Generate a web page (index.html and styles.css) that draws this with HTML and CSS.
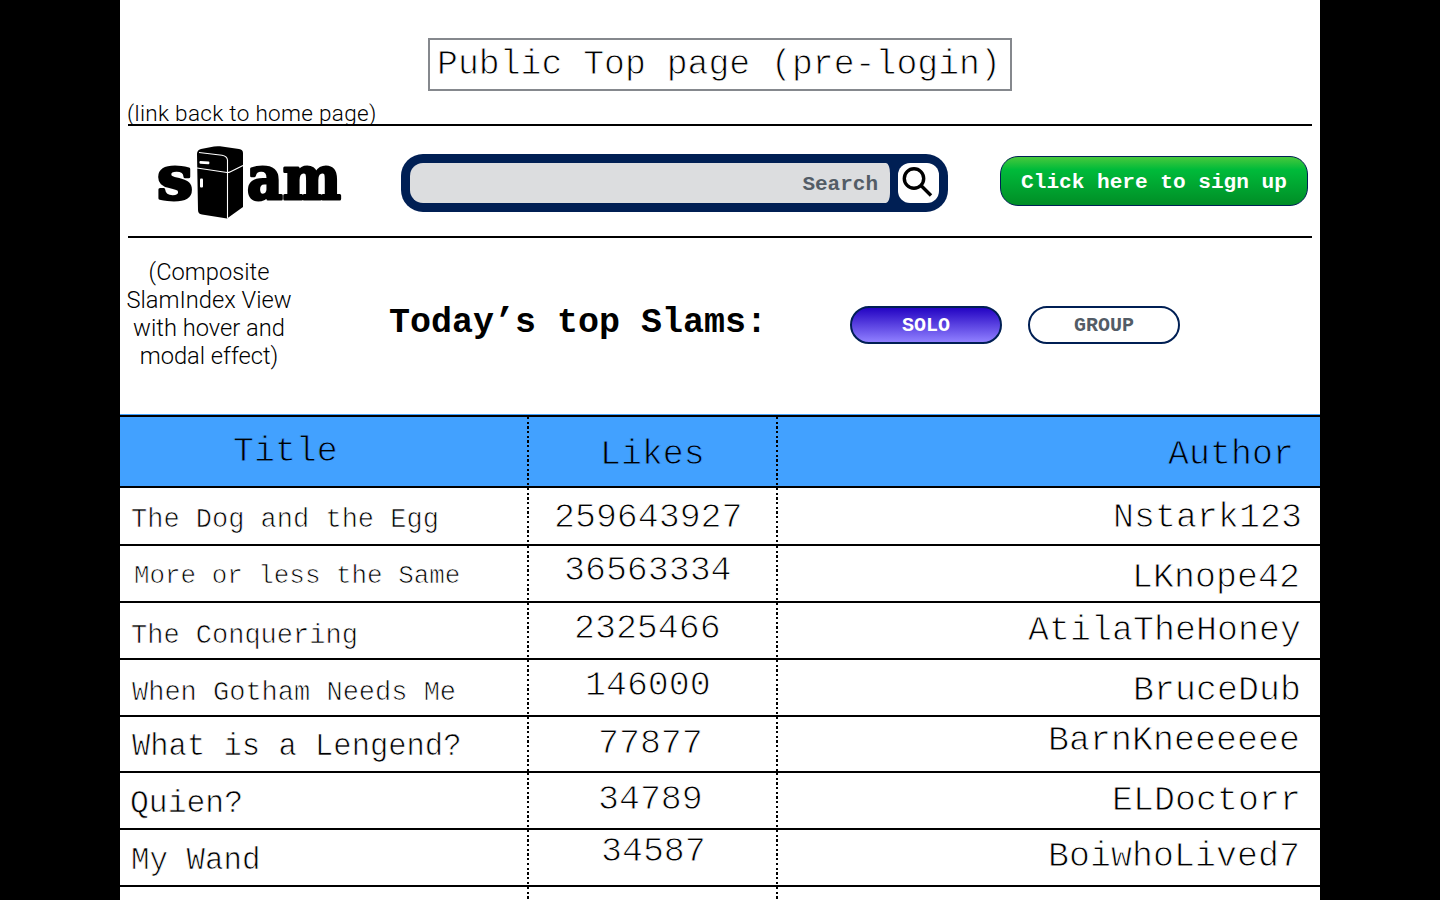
FILE: index.html
```html
<!DOCTYPE html>
<html lang="en">
<head>
<meta charset="utf-8">
<title>Slam</title>
<link rel="stylesheet" href="styles.css">
</head>
<body>
<main class="page">
  <div class="title-row"><h1 class="page-title">Public Top page (pre-login)</h1></div>
  <a class="home-note">(link back to home page)</a>
  <header class="topbar">
    <svg class="logo" viewBox="0 0 192 78" role="img" aria-label="slam">
      <g class="logo-text">
        <text x="4" y="54.500" textLength="36" lengthAdjust="spacingAndGlyphs">s</text>
        <text x="94" y="54.500" textLength="94" lengthAdjust="spacingAndGlyphs">am</text>
      </g>
      <path d="M44 10 Q44 6 48 5 L61 2.500 Q64 2 67 2.300 L86 5 Q90 5.500 90 9 V63 L74 74.500 L49 70.500 Q45 70 45 66 Z"/>
      <path class="fridge-line" d="M46 8.500 L69 11.200 Q74 12 74.500 16 V74 M44 24 L74 28.500 Q76 28.500 78 27.400 L90 21.500"/>
      <rect class="handle" x="46.500" y="17" width="10" height="2.600" rx="1" transform="rotate(4 47 17)"/>
      <rect class="handle" x="47" y="34.500" width="3" height="9" rx="1"/>
    </svg>
    <div class="search">
      <div class="search-field">Search</div>
      <div class="search-button"><svg viewBox="0 0 40 40"><circle cx="16" cy="15.500" r="9.700"/><path d="M22.500 22 L33 32.500"/></svg></div>
    </div>
    <button class="signup">Click here to sign up</button>
  </header>
  <section class="intro">
    <p class="view-note">(Composite<br>SlamIndex View<br>with hover and<br>modal effect)</p>
    <h2 class="heading">Today’s top Slams:</h2>
    <button class="pill solo">SOLO</button>
    <button class="pill group">GROUP</button>
  </section>
  <section class="table">
    <div class="row head"><div class="t">Title</div><div class="l">Likes</div><div class="a">Author</div></div>
    <div class="row r1"><div class="t">The Dog and the Egg</div><div class="l">259643927</div><div class="a">Nstark123</div></div>
    <div class="row r2"><div class="t">More or less the Same</div><div class="l">36563334</div><div class="a">LKnope42</div></div>
    <div class="row r3"><div class="t">The Conquering</div><div class="l">2325466</div><div class="a">AtilaTheHoney</div></div>
    <div class="row r4"><div class="t">When Gotham Needs Me</div><div class="l">146000</div><div class="a">BruceDub</div></div>
    <div class="row r5"><div class="t">What is a Lengend?</div><div class="l">77877</div><div class="a">BarnKneeeeee</div></div>
    <div class="row r6"><div class="t">Quien?</div><div class="l">34789</div><div class="a">ELDoctorr</div></div>
    <div class="row r7"><div class="t">My Wand</div><div class="l">34587</div><div class="a">BoiwhoLived7</div></div>
    <div class="row r8"><div class="t"></div><div class="l"></div><div class="a"></div></div>
  </section>
</main>
</body>
</html>
```
FILE: styles.css
```css
* { box-sizing: border-box; }
body { margin: 0; background: #000; height: 900px; overflow: hidden; }
.page {
  width: 1200px; height: 900px; margin: 0 auto; overflow: hidden;
  background: #fff; color: #000;
  font-family: "Liberation Mono", "Courier New", monospace;
}
h1, h2, p { margin: 0; }
button { font-family: inherit; padding: 0; }

.title-row { display: flex; justify-content: center; padding-top: 38px; }
.page-title {
  width: 584px; height: 53px; padding-left: 7px;
  border: 2px solid #85888d;
  font-size: 34.8px; font-weight: 400; line-height: 50px; white-space: nowrap;
  -webkit-text-stroke: .9px #fff;
}
.home-note {
  display: block; height: 33px; padding: 8px 0 0 7px;
  font: 300 22.5px/28px Roboto, sans-serif; letter-spacing: .32px; white-space: nowrap;
}

.topbar {
  display: flex; align-items: flex-start;
  height: 114px; margin: 0 8px; border-top: 2px solid #000; border-bottom: 2px solid #000;
}
.logo { width: 192px; height: 78px; margin: 18px 56px 0 25px; flex: none; overflow: visible; }
.logo-text {
  font-family: "DejaVu Serif", serif; font-weight: 700; font-size: 60px;
  stroke: #000; stroke-width: 3; stroke-linejoin: round;
}
.fridge-line { fill: none; stroke: #fff; stroke-width: 1.1; }
.handle { fill: #fff; }

.search {
  display: flex; width: 547px; height: 58px; margin-top: 28px; flex: none;
  padding: 9px; border-radius: 22px; background: #001f54;
}
.search-field {
  width: 480px; height: 40px; padding-right: 12px;
  border-radius: 13px 4px 4px 13px / 13px 10px 10px 13px; background: #dcdddf;
  color: #535c66; font-size: 21px; font-weight: 700; line-height: 44px; text-align: right;
}
.search-button { width: 41px; height: 40px; margin-left: 8px; border-radius: 12px; background: #fff; }
.search-button svg { display: block; width: 40px; height: 40px; fill: none; stroke: #000; stroke-width: 3.4; }
.signup {
  width: 308px; height: 50px; margin: 30px -8px 0 52px; flex: none;
  border: 1px solid #001f54; border-radius: 18px;
  background: linear-gradient(#48c83c, #00bb3a 26%, #008d26);
  color: #fff; font-size: 21.1px; font-weight: 700; line-height: 50px; white-space: nowrap;
}

.intro { display: flex; height: 176px; align-items: flex-start; }
.view-note {
  width: 178px; padding-top: 20px; flex: none;
  font: 300 23.7px/28px Roboto, sans-serif; text-align: center; white-space: nowrap;
}
.heading { width: 552px; padding: 65px 0 0 91px; font-size: 35px; line-height: 40px; white-space: nowrap; }
.pill {
  width: 152px; height: 38px; margin: 68px 26px 0 0; flex: none;
  border: 2px solid #001f54; border-radius: 19px;
  font-size: 20px; font-weight: 700; line-height: 36px;
}
.solo { background: linear-gradient(#2404c3, #9080ff); color: #fff; }
.group { background: #fff; color: #535c66; }

.table { border-top: 1px solid #42a1ff; }
.row {
  display: grid; grid-template-columns: 407px 249px 1fr;
  height: 57px; border-bottom: 2px solid #000;
  font-size: 34.9px; line-height: 40px; white-space: nowrap;
  -webkit-text-stroke: .9px #fff;
}
.head { height: 73px; border-top: 2px solid #000; background: #42a1ff; -webkit-text-stroke-color: #42a1ff; }
.l, .a {
  background: repeating-linear-gradient(#000 0 2.3px, transparent 2.3px 4.7px) left / 2px 100% no-repeat;
}
.a { text-align: right; letter-spacing: .06px; }
.t { font-size: 27px; -webkit-text-stroke-width: .7px; }

.head .t { padding: 15px 0 0 113px; font-size: 34.9px; -webkit-text-stroke-width: .9px; }
.head .l { padding: 18px 0 0 73px; }
.head .a { padding: 18px 26px 0 0; }
.r1 { height: 58px; }
.r1 .t { padding: 12px 0 0 11px; }
.r1 .l { padding: 10px 0 0 27px; }
.r1 .a { padding: 10px 18px 0 0; }
.r2 .t { padding: 10px 0 0 14px; font-size: 25.9px; }
.r2 .l { padding: 5px 0 0 37px; }
.r2 .a { padding: 12px 20px 0 0; }
.r3 .t { padding: 13px 0 0 11px; }
.r3 .l { padding: 6px 0 0 47px; }
.r3 .a { padding: 8px 19px 0 0; }
.r4 .t { padding: 13px 0 0 12px; }
.r4 .l { padding: 6px 0 0 58px; }
.r4 .a { padding: 11px 19px 0 0; }
.r5 { height: 56px; }
.r5 .t { padding: 10px 0 0 12px; font-size: 30.5px; }
.r5 .l { padding: 7px 0 0 71px; }
.r5 .a { padding: 4px 20px 0 0; }
.r6 .t { padding: 11px 0 0 10px; font-size: 31.4px; }
.r6 .l { padding: 7px 0 0 71px; }
.r6 .a { padding: 8px 19px 0 0; }
.r7 .t { padding: 11px 0 0 11px; font-size: 30.8px; }
.r7 .l { padding: 2px 0 0 74px; }
.r7 .a { padding: 7px 20px 0 0; }
```
